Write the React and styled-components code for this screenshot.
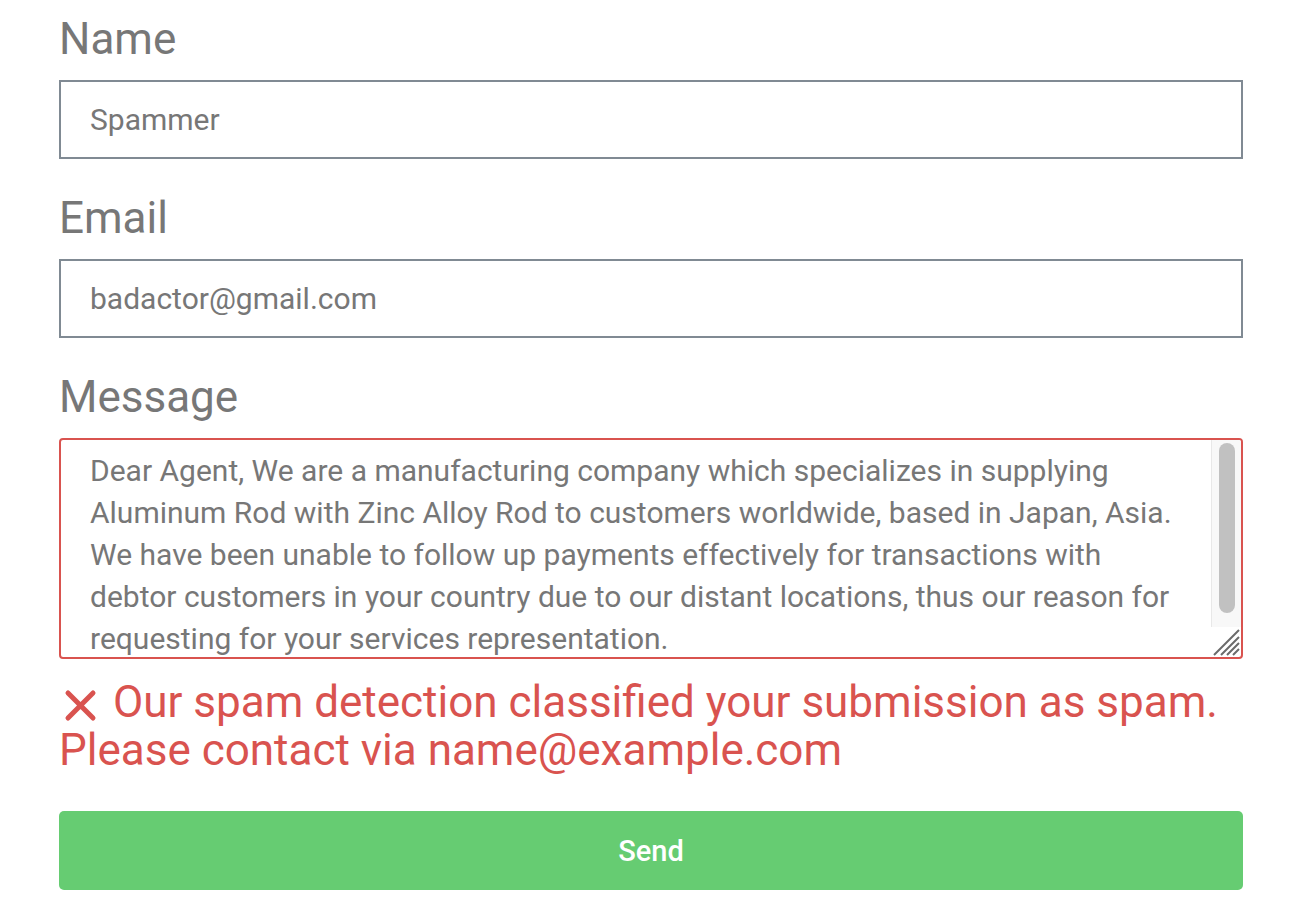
import React from "react";
import styled, { createGlobalStyle } from "styled-components";

const GlobalStyle = createGlobalStyle`
    * {
        box-sizing: border-box;
    }

    body {
        margin: 0;
        background: #fff;
        font-family: Roboto, "Liberation Sans", sans-serif;
        font-size: 30px;
        color: #777;
    }
`;

const Form = styled.form`
    display: flex;
    flex-direction: column;
    width: 1184px;
    margin: 0 0 0 59px;
    padding-top: 15px;
`;

const Field = styled.div`
    display: flex;
    flex-direction: column;
    margin-bottom: ${(p) => (p.$last ? "19px" : "35px")};
`;

const Label = styled.label`
    font-size: 44px;
    line-height: 49px;
    color: #777;
    margin-bottom: 16px;
`;

const Input = styled.input`
    height: 79px;
    width: 100%;
    border: 2px solid #808a93;
    border-radius: 0;
    padding: 0 29px;
    font-family: inherit;
    font-size: 30px;
    color: #777;
    background: #fff;
    outline: none;
`;

const AreaWrap = styled.div`
    position: relative;
    height: 221px;
`;

const TextArea = styled.textarea`
    display: block;
    height: 221px;
    width: 100%;
    border: 2px solid #d9534f;
    border-radius: 4px;
    padding: 10px 59px 19px 29px;
    font-family: inherit;
    font-size: 30px;
    line-height: 42px;
    color: #777;
    background: #fff;
    outline: none;
    resize: none;
    overflow: hidden;
`;

/* fake scrollbar + resize grip drawn over the textarea */
const ScrollTrack = styled.div`
    position: absolute;
    top: 2px;
    right: 2px;
    width: 30px;
    height: 187px;
    background: #f8f8f8;
    border-left: 1px solid #e8e8e8;
    border-top-right-radius: 2px;
    padding: 3px 6px 0 7px;
`;

const ScrollThumb = styled.div`
    height: 170px;
    border-radius: 8px;
    background: #c1c1c1;
`;

const Grip = styled.svg`
    position: absolute;
    right: 2px;
    bottom: 2px;
    width: 30px;
    height: 30px;
`;

const ErrorText = styled.p`
    margin: 0 0 37px;
    font-size: 44px;
    line-height: 48px;
    color: #d9534f;
`;

const CrossIcon = styled.svg`
    width: 34px;
    height: 34px;
    margin: 0 15px 0 5px;
    vertical-align: -6px;
`;

const SendButton = styled.button`
    height: 79px;
    width: 100%;
    border: none;
    border-radius: 5px;
    background: #66cc72;
    color: #fff;
    font-family: inherit;
    font-size: 29px;
    font-weight: 500;
    cursor: pointer;
`;

const message =
    "Dear Agent, We are a manufacturing company which specializes in supplying Aluminum Rod with Zinc Alloy Rod to customers worldwide, based in Japan, Asia. We have been unable to follow up payments effectively for transactions with debtor customers in your country due to our distant locations, thus our reason for requesting for your services representation.";

const App = () => {
    return (
        <>
            <GlobalStyle />
            <Form onSubmit={(e) => e.preventDefault()}>
                <Field>
                    <Label htmlFor="name">Name</Label>
                    <Input id="name" defaultValue="Spammer" />
                </Field>
                <Field>
                    <Label htmlFor="email">Email</Label>
                    <Input id="email" defaultValue="badactor@gmail.com" />
                </Field>
                <Field $last>
                    <Label htmlFor="message">Message</Label>
                    <AreaWrap>
                        <TextArea id="message" defaultValue={message} />
                        <ScrollTrack>
                            <ScrollThumb />
                        </ScrollTrack>
                        <Grip viewBox="0 0 30 30">
                            <path
                                d="M3 28 L28 3 M10 28 L28 10 M16 28 L28 16 M22 28 L28 22"
                                stroke="#6b6b6b"
                                strokeWidth="2"
                                fill="none"
                            />
                        </Grip>
                    </AreaWrap>
                </Field>
                <ErrorText>
                    <CrossIcon viewBox="0 0 34 34">
                        <path
                            d="M4 4 L29 29 M29 4 L4 29"
                            stroke="#d9534f"
                            strokeWidth="5"
                            strokeLinecap="round"
                            fill="none"
                        />
                    </CrossIcon>
                    Our spam detection classified your submission as spam. Please contact via name@example.com
                </ErrorText>
                <SendButton type="submit">Send</SendButton>
            </Form>
        </>
    );
};

export default App;
